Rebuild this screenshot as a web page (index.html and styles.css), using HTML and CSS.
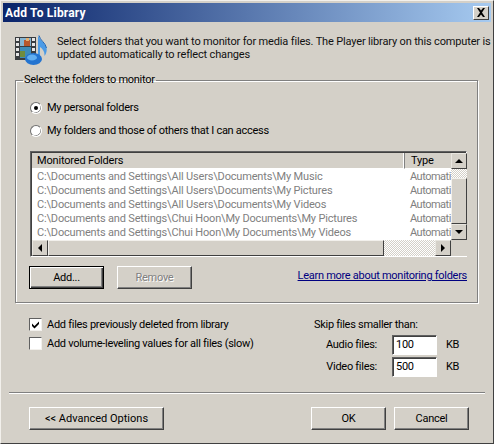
FILE: index.html
```html
<!DOCTYPE html>
<html lang="en">
<head>
<meta charset="utf-8">
<title>Add To Library</title>
<link rel="stylesheet" href="styles.css">
</head>
<body>
<div class="window">
  <div class="titlebar">
    <span class="title">Add To Library</span>
    <span class="close"><svg width="10" height="9" viewBox="0 0 10 9"><path d="M1 0h2l2 2.500L7 0h2L6 4.500 9 9H7L5 6.500 3 9H1l3-4.500z" fill="#000"/></svg></span>
  </div>
  <div class="intro">
    <svg class="app-icon" width="33" height="33" viewBox="0 0 33 33">
      <path d="M24 2c1 5 7 7 8.500 13 .7 3-.5 6-2 8 .3-4-1.500-7-4.500-9v12h-2V2z" fill="#4c9be6"/>
      <path d="M25 2.500c1 5 6.500 7 7.500 12.500" fill="none" stroke="#2467b4" stroke-width="1"/>
      <rect x="1" y="4" width="21" height="23" fill="#3a3d40"/>
      <g fill="#e6e6e6">
        <rect x="2" y="5" width="3" height="3"/><rect x="2" y="10" width="3" height="3"/><rect x="2" y="15" width="3" height="3"/><rect x="2" y="20" width="3" height="3"/>
        <rect x="18" y="5" width="3" height="3"/><rect x="18" y="10" width="3" height="3"/><rect x="18" y="15" width="3" height="3"/>
      </g>
      <rect x="6" y="5" width="11" height="8" fill="#86b5d2"/>
      <rect x="10" y="7" width="6" height="6" fill="#b8582c"/>
      <rect x="12" y="5" width="3" height="3" fill="#e6b070"/>
      <rect x="6" y="14" width="11" height="11" fill="#3e8cb8"/>
      <rect x="6" y="18" width="5" height="6" fill="#6f8c3e"/>
      <ellipse cx="19.500" cy="26" rx="8.500" ry="6" fill="#2474d0"/>
      <ellipse cx="18" cy="24.500" rx="5" ry="3" fill="#62aff0"/>
    </svg>
    <p class="intro-text">Select folders that you want to monitor for media files. The Player library on this computer is<br>updated automatically to reflect changes</p>
  </div>
  <fieldset class="group">
    <legend class="legend">Select the folders to monitor</legend>
    <label class="radio-row first"><span class="radio checked"></span>My personal folders</label>
    <label class="radio-row"><span class="radio"></span>My folders and those of others that I can access</label>
    <div class="list">
      <div class="list-main">
        <div class="list-head">
          <div class="head-cell col-folder">Monitored Folders</div>
          <div class="head-cell col-type">Type</div>
        </div>
        <div class="row"><span class="col-folder">C:\Documents and Settings\All Users\Documents\My Music</span><span class="col-type">Automati</span></div>
        <div class="row"><span class="col-folder">C:\Documents and Settings\All Users\Documents\My Pictures</span><span class="col-type">Automati</span></div>
        <div class="row"><span class="col-folder">C:\Documents and Settings\All Users\Documents\My Videos</span><span class="col-type">Automati</span></div>
        <div class="row"><span class="col-folder">C:\Documents and Settings\Chui Hoon\My Documents\My Pictures</span><span class="col-type">Automati</span></div>
        <div class="row"><span class="col-folder">C:\Documents and Settings\Chui Hoon\My Documents\My Videos</span><span class="col-type">Automati</span></div>
      </div>
      <div class="vscroll">
        <span class="sbtn"><i class="arrow up"></i></span>
        <span class="track short"></span>
        <span class="thumb vthumb"></span>
        <span class="sbtn"><i class="arrow down"></i></span>
      </div>
      <div class="hscroll">
        <span class="sbtn"><i class="arrow left"></i></span>
        <span class="thumb hthumb"></span>
        <span class="track grow"></span>
        <span class="sbtn"><i class="arrow right"></i></span>
      </div>
      <div class="corner"></div>
    </div>
    <div class="group-actions">
      <button class="btn default">Add...</button>
      <button class="btn disabled">Remove</button>
      <a class="link" href="#">Learn more about monitoring folders</a>
    </div>
  </fieldset>
  <div class="options">
    <div class="checks">
      <label class="check-row"><span class="check on"><svg width="9" height="9" viewBox="0 0 9 9"><path d="M1 3.500l2.500 2.500L8 1.500v2.500L3.500 8.500 1 6z" fill="#000"/></svg></span>Add files previously deleted from library</label>
      <label class="check-row"><span class="check"></span>Add volume-leveling values for all files (slow)</label>
    </div>
    <div class="skip">
      <div class="skip-title">Skip files smaller than:</div>
      <div class="skip-row"><span class="skip-label">Audio files:</span><span class="input">100</span><span class="unit">KB</span></div>
      <div class="skip-row"><span class="skip-label">Video files:</span><span class="input">500</span><span class="unit">KB</span></div>
    </div>
  </div>
  <div class="separator"></div>
  <div class="footer">
    <button class="btn wide">&lt;&lt; Advanced Options</button>
    <div class="footer-right">
      <button class="btn">OK</button>
      <button class="btn">Cancel</button>
    </div>
  </div>
</div>
</body>
</html>
```
FILE: styles.css
```css
* { box-sizing: border-box; }
html, body { margin: 0; padding: 0; }
body { width: 494px; height: 444px; overflow: hidden; background: #d4d0c8; }
.window {
  width: 494px; height: 444px; padding: 3px;
  background: #d4d0c8; color: #000;
  font: 11px/14px Roboto, "Liberation Sans", Arial, sans-serif;
  letter-spacing: -.28px;
  border: 1px solid; border-color: #f2f0ec #404040 #404040 #f2f0ec;
  display: flex; flex-direction: column;
}
.titlebar {
  height: 19px; flex: none; margin: -1px -1px 0; padding: 0 2px 0 2px;
  background: linear-gradient(90deg, #0a246a, #a6caf0);
  display: flex; align-items: center; justify-content: space-between;
}
.title { color: #fff; font-weight: 700; font-size: 12px; letter-spacing: .2px; }
.close {
  width: 16px; height: 14px; background: #d4d0c8;
  border: 1px solid; border-color: #fff #404040 #404040 #fff;
  display: flex; align-items: center; justify-content: center;
}
.intro { display: flex; height: 51px; flex: none; padding: 11px 0 0 10px; }
.app-icon { flex: none; }
.intro-text { margin: 2px 0 0 10px; line-height: 13px; white-space: nowrap; color: #111; letter-spacing: -.16px; }
.group {
  margin: 0 12px 0 11px; padding: 0 9px 0 14px; height: 230px; flex: none;
  border: 1px solid #808080; box-shadow: inset 1px 1px 0 #fff, 1px 1px 0 #fff;
  min-width: 0;
}
.legend { padding: 0 1px; margin-left: -7px; line-height: 14px; }
.radio-row { display: flex; align-items: center; gap: 5px; height: 14px; margin-top: 9px; white-space: nowrap; margin-bottom: 9px; }
.radio-row.first { margin-top: 14px; }
.radio {
  width: 12px; height: 12px; border-radius: 50%; background: #fff; flex: none;
  border: 1px solid; border-color: #707070 #fff #fff #707070;
  box-shadow: -.5px -.5px 0 #555 inset;
  display: flex; align-items: center; justify-content: center;
}
.radio.checked::after { content: ""; width: 4px; height: 4px; border-radius: 50%; background: #000; }
.list {
  width: 437px; height: 106px; margin-top: 13px; letter-spacing: -.17px;
  border: 1px solid; border-color: #606060 #fff #fff #606060;
  box-shadow: inset 1px 1px 0 #404040;
  display: grid; grid-template-columns: 420px 16px; grid-template-rows: 88px 16px;
}
.list-main { background: #fff; overflow: hidden; margin: 1px 0 0 1px; }
.list-head { display: flex; height: 16px; background: #d4d0c8; }
.head-cell { padding: 1px 0 0 5px; height: 16px; border-right: 1px solid #808080; border-bottom: 1px solid #fff; box-shadow: inset -1px 0 0 #fff; }
.col-folder { width: 373px; flex: none; white-space: nowrap; overflow: hidden; }
.col-type { width: 46px; flex: none; white-space: nowrap; overflow: hidden; }
.head-cell.col-folder { width: 373px; }
.head-cell.col-type { border-right: 0; box-shadow: none; padding-left: 6px; }
.row { display: flex; height: 14px; color: #808080; padding-left: 5px; margin-top: 0; }
.row .col-folder { width: 372px; }
.row .col-type { width: 42px; padding-left: 1px; letter-spacing: -.5px; }
.row:nth-child(2) { margin-top: 1px; }
.vscroll { display: flex; flex-direction: column; margin-top: 1px; }
.hscroll { display: flex; margin-left: 1px; }
.sbtn {
  width: 16px; height: 16px; flex: none; background: #d4d0c8;
  border: 1px solid; border-color: #e8e6e0 #404040 #404040 #e8e6e0;
  display: flex; align-items: center; justify-content: center;
}
.arrow { display: block; width: 0; height: 0; border: 4px solid transparent; }
.arrow.up { border-bottom-color: #000; border-top-width: 0; }
.arrow.down { border-top-color: #000; border-bottom-width: 0; }
.arrow.left { border-right-color: #000; border-left-width: 0; }
.arrow.right { border-left-color: #000; border-right-width: 0; }
.track {
  background-color: #e8e6e0;
  background-image: repeating-conic-gradient(#d4d0c8 0 25%, #fff 0 50%);
  background-size: 2px 2px;
}
.track.short { height: 9px; flex: none; }
.track.grow { flex: 1; }
.thumb { background: #d4d0c8; border: 1px solid; border-color: #f2f0ec #404040 #404040 #f2f0ec; }
.vthumb { flex: 1; }
.hthumb { width: 336px; flex: none; }
.corner { background: #d4d0c8; }
.group-actions { display: flex; align-items: flex-start; margin: 9px 0 0 -1px; }
.btn {
  width: 75px; height: 23px; padding: 0; background: #d4d0c8; color: #000;
  font: inherit; letter-spacing: inherit; border: 1px solid; border-color: #fff #404040 #404040 #fff;
  box-shadow: inset -1px -1px 0 #808080;
}
.btn.default { border-color: #000; box-shadow: inset 1px 1px 0 #fff, inset -1px -1px 0 #404040, inset -2px -2px 0 #808080; }
.btn.disabled { color: #808080; text-shadow: 1px 1px 0 #fff; margin-left: 13px; }
.link { margin-left: auto; margin-right: 1px; margin-top: 3px; color: #000080; white-space: nowrap; }
.options { display: flex; justify-content: space-between; height: 89px; flex: none; padding: 12px 53px 0 25px; }
.check-row { display: flex; align-items: center; gap: 5px; height: 19px; white-space: nowrap; }
.check {
  width: 13px; height: 13px; background: #fff; flex: none;
  border: 1px solid; border-color: #606060 #f2f0ec #f2f0ec #606060;
  display: flex; align-items: center; justify-content: center;
}
.skip { width: 123px; margin-top: 3px; }
.skip-title { height: 14px; }
.skip-row { display: flex; align-items: center; height: 21px; margin-top: 1px; }
.skip-row:nth-child(2) { margin-top: 2px; }
.skip-label { width: 63px; text-align: right; flex: none; white-space: nowrap; }
.input {
  width: 45px; height: 20px; margin-left: 15px; flex: none; background: #fff;
  border: 1px solid; border-color: #606060 #fff #fff #606060;
  box-shadow: inset 1px 1px 0 #404040; padding: 2px 0 0 3px;
}
.unit { margin-left: 9px; }
.separator { height: 2px; flex: none; margin: 0 5px; background: #808080; border-bottom: 1px solid #fff; }
.footer { display: flex; justify-content: space-between; padding: 13px 21px 0 25px; }
.btn.wide { width: 135px; letter-spacing: 0; }
.footer-right { display: flex; gap: 8px; }
```
